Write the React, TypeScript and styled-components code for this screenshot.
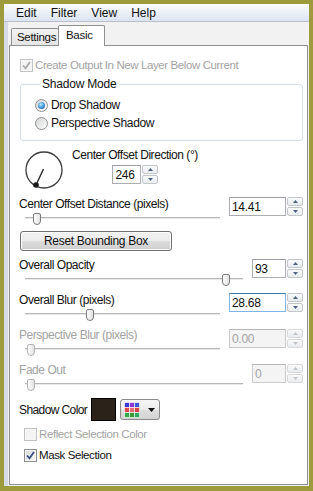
import React from 'react';
import styled, { createGlobalStyle } from 'styled-components';

const Global = createGlobalStyle`
  html, body { margin: 0; padding: 0; background: #9d9b3b; }
  body {
    font-family: 'Liberation Sans', Arial, sans-serif;
    font-size: 11px;
    letter-spacing: -0.15px;
    color: #111;
  }
`;

const Frame = styled.div`
  width: 313px;
  height: 491px;
  box-sizing: border-box;
  background: #9d9b3b;
  padding: 4px 4px 5px 4px;
`;

const Window = styled.div`
  height: 100%;
  box-sizing: border-box;
  background: #f2f2f2;
  border-left: 4px solid #d3dbe7;
  display: flex;
  flex-direction: column;
`;

const MenuBar = styled.div`
  height: 17px;
  border-bottom: 1px solid #b9bfc9;
  background: linear-gradient(#fbfcfe, #e9eef7 55%, #dce3f1);
  display: flex;
  align-items: center;
  margin-left: -4px;
  font-size: 12px;
  letter-spacing: 0;
`;

const MenuItem = styled.span`
  padding: 0 7px;
  &:first-child { padding-left: 12px; }
`;

const TabStrip = styled.div`
  height: 23px;
  display: flex;
  align-items: flex-end;
  padding-left: 3px;
`;

const Tab = styled.div<{ $active?: boolean }>`
  box-sizing: border-box;
  height: ${p => (p.$active ? 21 : 17)}px;
  width: ${p => (p.$active ? 47 : 48)}px;
  padding-left: ${p => (p.$active ? 7 : 5)}px;
  padding-top: ${p => (p.$active ? 3 : 2)}px;
  margin-bottom: ${p => (p.$active ? -1 : 0)}px;
  margin-left: ${p => (p.$active ? -1 : 0)}px;
  border: 1px solid #8e8f8f;
  border-bottom: none;
  border-radius: 2px 2px 0 0;
  background: ${p => (p.$active ? '#fff' : 'linear-gradient(#f3f3f3, #e4e4e4)')};
  position: relative;
  z-index: ${p => (p.$active ? 1 : 0)};
  font-size: 11.5px;
  letter-spacing: -0.3px;
  white-space: nowrap;
`;

const Panel = styled.div`
  flex: 1;
  margin: 0 1px 1px 1px;
  border: 1px solid #8e8f8f;
  background: #fff;
  padding: 11px 4px 0 9px;
  display: flex;
  flex-direction: column;
`;

const CheckRow = styled.div<{ $indent: number; $mt?: number }>`
  height: 16px;
  margin-top: ${p => p.$mt ?? 0}px;
  margin-left: ${p => p.$indent}px;
  display: flex;
  align-items: center;
  gap: 2px;
`;

const CheckText = styled.span<{ $disabled?: boolean }>`
  font-size: 11.5px;
  letter-spacing: -0.4px;
  white-space: nowrap;
  color: ${p => (p.$disabled ? '#a3a3a3' : '#111')};
`;

const Box = styled.span<{ $disabled?: boolean }>`
  width: 13px;
  height: 13px;
  box-sizing: border-box;
  border: 1px solid ${p => (p.$disabled ? '#c2c2c2' : '#8e8f8f')};
  box-shadow: inset 0 0 0 1px #f6f6f6;
  background: ${p => (p.$disabled ? '#f4f4f4' : 'linear-gradient(135deg, #d6d7d8, #fbfbfb)')};
  display: flex;
  align-items: center;
  justify-content: center;
`;

const Check = ({ checked, disabled }: { checked?: boolean; disabled?: boolean }) => (
  <Box $disabled={disabled}>
    {checked && (
      <svg width="11" height="11" viewBox="0 0 11 11">
        <path d="M2 5.5 L4.5 8.3 L9 2" fill="none" stroke={disabled ? '#a9a9a9' : '#3b4f82'} strokeWidth="1.8" />
      </svg>
    )}
  </Box>
);

const Group = styled.fieldset`
  margin: 4px 0 0 1px;
  border: 1px solid #d5dfe5;
  border-radius: 3px;
  padding: 7px 0 10px 14px;
  display: flex;
  flex-direction: column;
  gap: 4px;
`;

const Legend = styled.legend`
  padding: 0 2px;
  margin-left: 5px;
  line-height: 14px;
  font-size: 12px;
  letter-spacing: -0.2px;
`;

const RadioRow = styled.label`
  height: 14px;
  display: flex;
  align-items: center;
  gap: 3px;
  font-size: 12px;
  letter-spacing: -0.35px;
`;

const RadioDot = styled.span<{ $on?: boolean }>`
  width: 13px;
  height: 13px;
  box-sizing: border-box;
  border-radius: 50%;
  border: 1px solid #8e8f8f;
  background: linear-gradient(135deg, #d4d5d6, #fdfdfd);
  display: flex;
  align-items: center;
  justify-content: center;
  &::after {
    content: '';
    width: 7px;
    height: 7px;
    border-radius: 50%;
    display: ${p => (p.$on ? 'block' : 'none')};
    background: radial-gradient(circle at 40% 35%, #b6ecff, #3d94d6 55%, #1b4f86);
  }
`;

const DialRow = styled.div`
  margin-top: 7px;
  display: flex;
  align-items: flex-start;
`;

const Dial = styled.svg`
  margin: 2px 0 0 5px;
  flex: none;
`;

const DirBlock = styled.div`
  margin-left: 8px;
  display: flex;
  flex-direction: column;
`;

const DirSpin = styled.div`
  margin: 3px 0 0 1px;
  display: grid;
`;

const Label = styled.div<{ $disabled?: boolean }>`
  height: 14px;
  line-height: 14px;
  font-size: 12px;
  letter-spacing: -0.45px;
  color: ${p => (p.$disabled ? '#a3a3a3' : '#111')};
  white-space: nowrap;
`;

const SliderRow = styled.div`
  margin-top: 7px;
  display: grid;
  grid-template-columns: 1fr auto;
  grid-template-rows: 14px 14px;
  column-gap: 9px;
`;

const Track = styled.div`
  grid-column: 1;
  grid-row: 2;
  margin-left: 6px;
  position: relative;
  &::before {
    content: '';
    position: absolute;
    left: 0;
    right: 0;
    top: 6px;
    height: 1px;
    background: #b7b7b7;
    border-bottom: 1px solid #e8e8e8;
  }
`;

const Thumb = styled.span<{ $at: number; $disabled?: boolean }>`
  position: absolute;
  left: ${p => p.$at}px;
  top: 2px;
  width: 8px;
  height: 12px;
  box-sizing: border-box;
  border: 1px solid ${p => (p.$disabled ? '#b4b4b4' : '#7b7b7b')};
  border-radius: 2px 2px 4px 4px;
  background: linear-gradient(90deg, #fdfdfd, #e2e2e2);
`;

const Spin = styled.div<{ $w: number; $mt?: number }>`
  grid-column: 2;
  grid-row: 1 / 3;
  margin-top: ${p => p.$mt ?? 0}px;
  width: ${p => p.$w}px;
  height: 19px;
  display: flex;
  gap: 1px;
`;

const SpinInput = styled.div<{ $disabled?: boolean; $focus?: boolean }>`
  flex: 1;
  box-sizing: border-box;
  border: 1px solid ${p => (p.$focus ? '#7eb4ea' : p.$disabled ? '#cacaca' : '#abadb3')};
  border-top-color: ${p => (p.$focus ? '#3d7bad' : p.$disabled ? '#b5b5b5' : '#9a9da4')};
  background: ${p => (p.$disabled ? '#f4f4f4' : '#fff')};
  color: ${p => (p.$disabled ? '#a3a3a3' : '#111')};
  padding-left: 2px;
  font-size: 12px;
  letter-spacing: -0.3px;
  display: flex;
  align-items: center;
`;

const SpinButtons = styled.div`
  width: 16px;
  display: flex;
  flex-direction: column;
  gap: 1px;
`;

const SpinBtn = styled.span<{ $disabled?: boolean }>`
  flex: 1;
  box-sizing: border-box;
  border: 1px solid ${p => (p.$disabled ? '#d8d8d8' : '#c2c5ca')};
  border-radius: 2px;
  background: linear-gradient(#fafafa, #e9ebee);
  display: flex;
  align-items: center;
  justify-content: center;
  svg { fill: ${p => (p.$disabled ? '#bfc4cb' : '#4d6185')}; }
`;

const Reset = styled.button`
  margin: 6px 0 0 1px;
  width: 152px;
  height: 20px;
  border: 1px solid #707070;
  border-radius: 3px;
  background: linear-gradient(#f2f2f2 0%, #ebebeb 50%, #dddddd 51%, #cfcfcf 100%);
  box-shadow: inset 0 0 0 1px #fcfcfc;
  font-family: inherit;
  font-size: 12px;
  letter-spacing: -0.3px;
  color: #111;
  padding: 0;
`;

const ColorRow = styled.div`
  margin-top: 7px;
  height: 23px;
  display: flex;
  align-items: center;
`;

const ColorLabel = styled(Label)`
  width: 72px;
  letter-spacing: -0.6px;
`;

const Swatch = styled.span`
  width: 25px;
  height: 23px;
  box-sizing: border-box;
  border: 1px solid #000;
  background: #2b2319;
`;

const PickerBtn = styled.span`
  margin-left: 4px;
  width: 40px;
  height: 21px;
  box-sizing: border-box;
  border: 1px solid #8b8b8b;
  border-radius: 3px;
  background: linear-gradient(#f6f6f6 0%, #ececec 50%, #dfdfdf 51%, #d3d3d3 100%);
  display: flex;
  align-items: center;
  padding-left: 3px;
  gap: 8px;
`;

const Arrow = ({ up, disabled }: { up?: boolean; disabled?: boolean }) => (
  <SpinBtn $disabled={disabled}>
    <svg width="5" height="3" viewBox="0 0 5 3">
      <path d={up ? 'M0 3 L2.5 0 L5 3Z' : 'M0 0 L2.5 3 L5 0Z'} />
    </svg>
  </SpinBtn>
);

type SpinProps = { value: string; w: number; mt?: number; disabled?: boolean; focus?: boolean };

const SpinBox = ({ value, w, mt, disabled, focus }: SpinProps) => (
  <Spin $w={w} $mt={mt}>
    <SpinInput $disabled={disabled} $focus={focus}>{value}</SpinInput>
    <SpinButtons>
      <Arrow up disabled={disabled} />
      <Arrow disabled={disabled} />
    </SpinButtons>
  </Spin>
);

type SliderProps = { label: string; at: number; value: string; wide?: boolean; mt?: number; disabled?: boolean; focus?: boolean };

const Slider = ({ label, at, value, wide, mt, disabled, focus }: SliderProps) => (
  <SliderRow>
    <Label $disabled={disabled}>{label}</Label>
    <Track>
      <Thumb $at={at} $disabled={disabled} />
    </Track>
    <SpinBox value={value} w={wide ? 74 : 51} mt={mt} disabled={disabled} focus={focus} />
  </SliderRow>
);

const gridColors = [
  ['#3a3ad0', '#8a3ad0', '#3a58d8'],
  ['#e04a4a', '#e86a7a', '#d8404a'],
  ['#2ea84a', '#3a9a36', '#2ea862'],
];

const App: React.FC = () => {
  return (
    <Frame>
      <Global />
      <Window>
        <MenuBar>
          <MenuItem>Edit</MenuItem>
          <MenuItem>Filter</MenuItem>
          <MenuItem>View</MenuItem>
          <MenuItem>Help</MenuItem>
        </MenuBar>
        <TabStrip>
          <Tab>Settings</Tab>
          <Tab $active>Basic</Tab>
        </TabStrip>
        <Panel>
          <CheckRow $indent={1}>
            <Check checked disabled />
            <CheckText $disabled>Create Output In New Layer Below Current</CheckText>
          </CheckRow>

          <Group>
            <Legend>Shadow Mode</Legend>
            <RadioRow>
              <RadioDot $on />
              Drop Shadow
            </RadioRow>
            <RadioRow>
              <RadioDot />
              Perspective Shadow
            </RadioRow>
          </Group>

          <DialRow>
            <Dial width="40" height="40" viewBox="0 0 40 40">
              <circle cx="20" cy="20" r="18" fill="none" stroke="#3a3a3a" strokeWidth="1.3" />
              <line x1="19.5" y1="19" x2="12" y2="35" stroke="#2a2a2a" strokeWidth="1.4" />
              <circle cx="12" cy="35" r="2.8" fill="#1a1a1a" />
            </Dial>
            <DirBlock>
              <Label>Center Offset Direction (°)</Label>
              <DirSpin>
                <SpinBox value="246" w={46} />
              </DirSpin>
            </DirBlock>
          </DialRow>

          <Slider label="Center Offset Distance (pixels)" at={8} value="14.41" wide />
          <Reset>Reset Bounding Box</Reset>
          <Slider label="Overall Opacity" at={197} value="93" mt={1} />
          <Slider label="Overall Blur (pixels)" at={61} value="28.68" wide focus />
          <Slider label="Perspective Blur (pixels)" at={2} value="0.00" wide mt={1} disabled />
          <Slider label="Fade Out" at={2} value="0" mt={1} disabled />

          <ColorRow>
            <ColorLabel>Shadow Color</ColorLabel>
            <Swatch />
            <PickerBtn>
              <svg width="16" height="16" viewBox="0 0 16 16">
                {gridColors.map((row, r) =>
                  row.map((c, i) => <rect key={`${r}-${i}`} x={i * 5 + 0.5} y={r * 5 + 0.5} width="5" height="5" fill={c} stroke="#fff" strokeWidth="0.6" />)
                )}
              </svg>
              <svg width="7" height="4" viewBox="0 0 7 4">
                <path d="M0 0 L3.5 4 L7 0Z" fill="#111" />
              </svg>
            </PickerBtn>
          </ColorRow>

          <CheckRow $indent={5} $mt={5}>
            <Check disabled />
            <CheckText $disabled>Reflect Selection Color</CheckText>
          </CheckRow>
          <CheckRow $indent={5} $mt={5}>
            <Check checked />
            <CheckText>Mask Selection</CheckText>
          </CheckRow>
        </Panel>
      </Window>
    </Frame>
  );
};

export default App;
